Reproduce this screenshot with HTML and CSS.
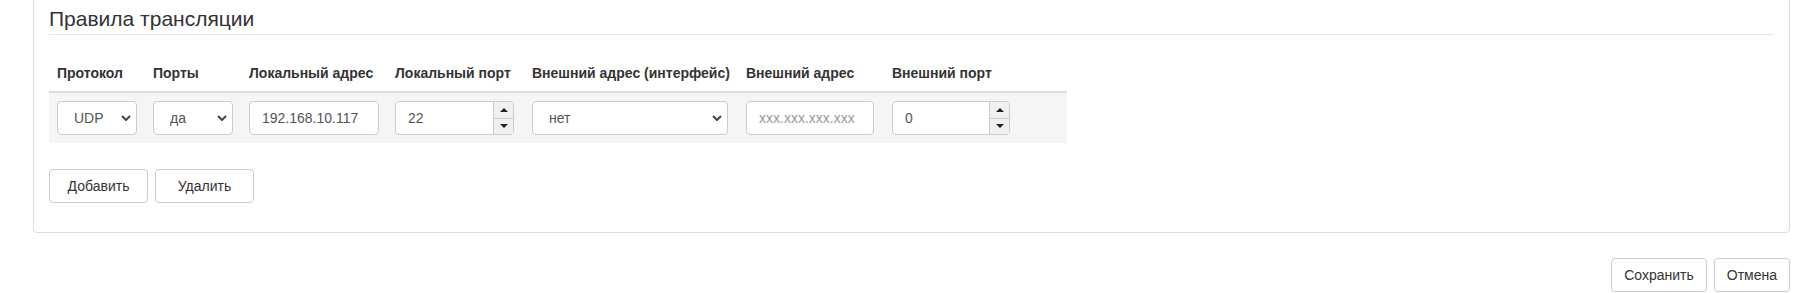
FILE: index.html
```html
<!DOCTYPE html>
<html lang="ru">
<head>
    <meta charset="UTF-8">
    <title>Правила трансляции</title>
    <link rel="stylesheet" href="styles.css">
</head>
<body>

    <div class="panel">
        <div class="legend">Правила трансляции</div>

        <table class="rules">
            <thead>
                <tr>
                    <th class="col-proto">Протокол</th>
                    <th class="col-ports">Порты</th>
                    <th class="col-laddr">Локальный адрес</th>
                    <th class="col-lport">Локальный порт</th>
                    <th class="col-iface">Внешний адрес (интерфейс)</th>
                    <th class="col-eaddr">Внешний адрес</th>
                    <th class="col-eport">Внешний порт</th>
                </tr>
            </thead>
            <tbody>
                <tr>
                    <td>
                        <div class="select w-80">
                            <select><option>UDP</option><option>TCP</option></select>
                            <svg class="chevron" width="10" height="6" viewBox="0 0 10 6"><polyline points="1,1 5,5 9,1" /></svg>
                        </div>
                    </td>
                    <td>
                        <div class="select w-80">
                            <select><option>да</option><option>нет</option></select>
                            <svg class="chevron" width="10" height="6" viewBox="0 0 10 6"><polyline points="1,1 5,5 9,1" /></svg>
                        </div>
                    </td>
                    <td><input class="field w-130" type="text" value="192.168.10.117"></td>
                    <td>
                        <div class="number w-119">
                            <input type="text" value="22">
                            <div class="spin"><span class="up"></span><span class="down"></span></div>
                        </div>
                    </td>
                    <td>
                        <div class="select w-196">
                            <select><option>нет</option></select>
                            <svg class="chevron" width="10" height="6" viewBox="0 0 10 6"><polyline points="1,1 5,5 9,1" /></svg>
                        </div>
                    </td>
                    <td><input class="field w-128" type="text" placeholder="xxx.xxx.xxx.xxx"></td>
                    <td>
                        <div class="number w-118">
                            <input type="text" value="0">
                            <div class="spin"><span class="up"></span><span class="down"></span></div>
                        </div>
                    </td>
                </tr>
            </tbody>
        </table>

        <div class="buttons">
            <button class="btn btn-wide">Добавить</button>
            <button class="btn btn-wide">Удалить</button>
        </div>
    </div>

    <div class="footer">
        <button class="btn">Сохранить</button>
        <button class="btn">Отмена</button>
    </div>

</body>
</html>
```

FILE: styles.css
```css
* {
    box-sizing: border-box;
}
body {
    margin: 0;
    font-family: "Liberation Sans", Arial, sans-serif;
    font-size: 14px;
    line-height: 20px;
    color: #333;
    background-color: #fff;
}
.panel {
    margin: -12px 11px 0 33px;
    padding: 15px 16px 29px 15px;
    border: 1px solid #ddd;
    border-radius: 4px;
}
.legend {
    font-size: 21px;
    line-height: 30px;
    color: #333;
    border-bottom: 1px solid #e5e5e5;
    margin-bottom: 20px;
}
.rules {
    table-layout: fixed;
    width: 1018px;
    border-collapse: separate;
    border-spacing: 0;
    margin-bottom: 26px;
}
.rules th {
    text-align: left;
    font-weight: bold;
    padding: 8px;
    border-bottom: 2px solid #ddd;
    white-space: nowrap;
    box-sizing: content-box;
}
.rules td {
    padding: 8px;
    background-color: #f5f5f5;
}
.col-proto { width: 80px; }
.col-ports { width: 80px; }
.col-laddr { width: 130px; }
.col-lport { width: 121px; }
.col-iface { width: 198px; }
.col-eaddr { width: 130px; }
.col-eport { width: 167px; }

.w-80 { width: 80px; }
.w-118 { width: 118px; }
.w-119 { width: 119px; }
.w-128 { width: 128px; }
.w-130 { width: 130px; }
.w-196 { width: 196px; }

.field,
.select select,
.number {
    height: 34px;
    border: 1px solid #ccc;
    border-radius: 4px;
    background-color: #fff;
}
.field,
.select select,
.number input {
    font-family: "Liberation Sans", Arial, sans-serif;
    font-size: 14px;
    line-height: 20px;
    color: #555;
    outline: none;
}
.field {
    display: block;
    padding: 6px 12px;
}
.field::placeholder {
    color: #999;
}
.select {
    position: relative;
}
.select select {
    display: block;
    width: 100%;
    padding: 6px 24px 6px 16px;
    appearance: none;
    -webkit-appearance: none;
}
.select .chevron {
    position: absolute;
    right: 6px;
    top: 14px;
    pointer-events: none;
}
.chevron polyline {
    fill: none;
    stroke: #444;
    stroke-width: 2;
}
.number {
    display: flex;
    overflow: hidden;
}
.number input {
    flex: 1;
    min-width: 0;
    border: 0;
    padding: 6px 12px;
    background: transparent;
}
.spin {
    width: 20px;
    display: flex;
    flex-direction: column;
    border-left: 1px solid #ccc;
    background-color: #f0f0f0;
}
.spin span {
    flex: 1;
    display: flex;
    align-items: center;
    justify-content: center;
}
.spin .up {
    border-bottom: 1px solid #ccc;
}
.spin .up::after {
    content: "";
    border-left: 4px solid transparent;
    border-right: 4px solid transparent;
    border-bottom: 4px solid #222;
}
.spin .down::after {
    content: "";
    border-left: 4px solid transparent;
    border-right: 4px solid transparent;
    border-top: 4px solid #222;
}

.buttons {
    display: flex;
    gap: 7px;
}
.btn {
    height: 34px;
    padding: 6px 12px;
    font-family: "Liberation Sans", Arial, sans-serif;
    font-size: 14px;
    line-height: 20px;
    color: #333;
    background-color: #fff;
    border: 1px solid #ccc;
    border-radius: 4px;
    cursor: pointer;
}
.btn-wide {
    width: 99px;
}
.footer {
    display: flex;
    justify-content: flex-end;
    gap: 7px;
    margin: 25px 11px 0 0;
}
```
